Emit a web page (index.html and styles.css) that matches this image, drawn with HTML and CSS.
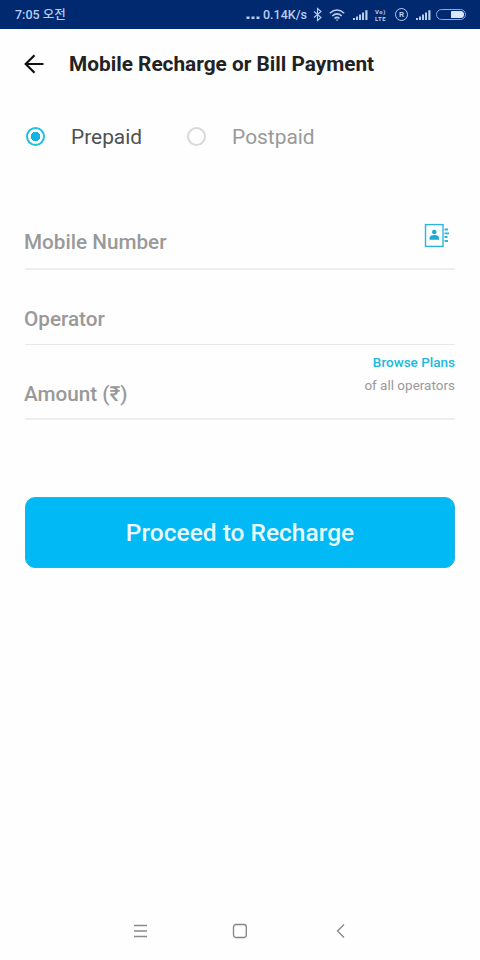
FILE: index.html
```
<!DOCTYPE html>
<html lang="en">
<head>
    <meta charset="UTF-8">
    <meta name="viewport" content="width=device-width, initial-scale=1.0">
    <title>Mobile Recharge or Bill Payment</title>
    <link rel="stylesheet" href="styles.css">
</head>
<body>
    <div class="statusbar">
        <span class="time">7:05 <span lang="ko">오전</span></span>
        <div class="status-right">
            <svg class="dots" width="14" height="16" viewBox="0 0 14 16"><path d="M0.500 9.500h3v2.500h-3zM5.500 9.500h3v2.500h-3zM10.500 9.500h3v2.500h-3z" fill="#b9cdf0"/></svg>
            <span class="speed">0.14K/s</span>
            <svg class="bluetooth" width="9" height="16" viewBox="0 0 9 16"><path d="M1 4.500l7 6-3.500 3V1.500L8 4.500l-7 6" fill="none" stroke="#b9cdf0" stroke-width="1.100"/></svg>
            <svg class="wifi" width="16" height="16" viewBox="0 0 16 16"><path d="M.8 6.300Q8-.200 15.200 6.300M3.200 9Q8 4.800 12.800 9M5.500 11.400Q8 9.300 10.500 11.400" fill="none" stroke="#b9cdf0" stroke-width="1.500"/><path d="M6.500 12.500h3L8 14z" fill="#b9cdf0"/></svg>
            <svg class="signal" width="15" height="16" viewBox="0 0 15 16"><path d="M0 11h2v2H0zM3 9.500h2V13H3zM6 7.500h2V13H6zM9 5.500h2V13H9zM12.300 3.200h2.200V13h-2.200z" fill="#b9cdf0"/></svg>
            <span class="volte"><span>Vo)</span><span>LTE</span></span>
            <span class="roaming">R</span>
            <svg class="signal" width="15" height="16" viewBox="0 0 15 16"><path d="M0 11h2v2H0zM3 9.500h2V13H3zM6 7.500h2V13H6zM9 5.500h2V13H9zM12.300 3.200h2.200V13h-2.200z" fill="#b9cdf0"/></svg>
            <span class="battery"><span class="level"></span></span>
        </div>
    </div>

    <header class="header">
        <svg width="20" height="20" viewBox="0 0 20 20"><path d="M19.500 10H2M10.500 1.200L1.700 10l8.800 8.800" fill="none" stroke="#111" stroke-width="2.200"/></svg>
        <h1>Mobile Recharge or Bill Payment</h1>
    </header>

    <main class="content">
        <div class="types">
            <label class="type selected"><input type="radio" name="type" checked>Prepaid</label>
            <label class="type"><input type="radio" name="type">Postpaid</label>
        </div>

        <div class="field number">
            <span class="label">Mobile Number</span>
            <svg class="contacts" width="26" height="26" viewBox="0 0 26 26">
                <rect x="1.500" y="1.600" width="17.500" height="21.800" fill="none" stroke="#2fb5da" stroke-width="1.400"/>
                <circle cx="10.300" cy="9" r="2.300" fill="#1ba9d5"/>
                <path d="M5.600 16.800v-1.500q0-3.300 4.700-3.300t4.700 3.300v1.500z" fill="#1ba9d5"/>
                <path d="M20.500 6.500h3.500M20.500 10.300h4.500M20.500 14h3M20.500 18h3.500" stroke="#2fb5da" stroke-width="1.800"/>
            </svg>
        </div>
        <div class="field operator">
            <span class="label">Operator</span>
        </div>
        <div class="field amount">
            <span class="label">Amount (₹)</span>
            <div class="plans">
                <a>Browse Plans</a>
                <span>of all operators</span>
            </div>
        </div>

        <button class="proceed">Proceed to Recharge</button>
    </main>

    <nav class="navbar">
        <svg width="16" height="16" viewBox="0 0 16 16"><path d="M2 2.500h13M2 8h13M2 13.500h13" stroke="#8a8a8a" stroke-width="1.300"/></svg>
        <svg width="16" height="16" viewBox="0 0 16 16"><rect x="1.500" y="1.500" width="12.800" height="13" rx="2.500" fill="none" stroke="#858585" stroke-width="1.300"/></svg>
        <svg width="16" height="16" viewBox="0 0 16 16"><path d="M12 1.500L5.500 8l6.500 6.500" fill="none" stroke="#858585" stroke-width="1.300"/></svg>
    </nav>
</body>
</html>
```
FILE: styles.css
```
body {
    margin: 0;
    height: 960px;
    display: flex;
    flex-direction: column;
    background-color: #fefefe;
    font-family: Roboto, "Noto Sans CJK KR", sans-serif;
}
svg {
    display: block;
    flex-shrink: 0;
}
.statusbar {
    height: 29px;
    box-sizing: border-box;
    padding: 0 14px 0 15px;
    display: flex;
    align-items: center;
    justify-content: space-between;
    background-color: #002970;
    color: #b9cdf0;
    font-size: 12.5px;
    font-weight: 500;
    line-height: 16px;
}
.status-right {
    display: flex;
    align-items: center;
}
.speed {
    width: 44px;
    margin-left: 3px;
    white-space: nowrap;
}
.bluetooth {
    margin-left: 6px;
}
.wifi {
    margin-left: 7px;
}
.signal {
    margin-left: 8px;
}
.volte {
    width: 13px;
    margin-left: 7px;
    display: flex;
    flex-direction: column;
    font-size: 6px;
    line-height: 7px;
    letter-spacing: 0.5px;
    font-weight: bold;
}
.roaming {
    width: 11px;
    height: 11px;
    margin-left: 7px;
    border: 1px solid #b9cdf0;
    border-radius: 50%;
    font-size: 8px;
    line-height: 11px;
    font-weight: bold;
    text-align: center;
}
.battery {
    width: 28px;
    height: 9px;
    margin-left: 5px;
    display: flex;
    justify-content: flex-end;
    border: 1px solid #8ca8dc;
    border-radius: 6px;
}
.level {
    width: 13px;
    height: 7px;
    margin: 1px;
    background-color: #dce6fa;
    border-radius: 1px 4px 4px 1px;
}
.header {
    height: 70px;
    padding-left: 24px;
    display: flex;
    align-items: center;
}
.header h1 {
    margin: 0 0 0 25px;
    font-size: 20.8px;
    font-weight: bold;
    color: #222;
}
.content {
    flex: 1;
    padding: 0 25px;
    display: flex;
    flex-direction: column;
}
.types {
    height: 76px;
    display: flex;
    align-items: center;
    gap: 44px;
}
.type {
    display: flex;
    align-items: center;
    font-size: 20.9px;
    color: #999;
}
.selected {
    color: #505050;
}
.type input {
    appearance: none;
    box-sizing: border-box;
    width: 19px;
    height: 19px;
    margin: -2px 26px 0 1px;
    border: 2px solid #d8d8d8;
    border-radius: 50%;
}
.type input:checked {
    border-color: #22bfe0;
    background: radial-gradient(circle, #12b4e4 4.5px, #fff 5px);
}
.field {
    box-sizing: border-box;
    display: flex;
    justify-content: space-between;
    align-items: flex-end;
    border-bottom: 1px solid #e8e8e8;
}
.label {
    margin-left: -1px;
    font-size: 20.7px;
    line-height: 24px;
    font-weight: 500;
    color: #999;
}
.number {
    height: 95px;
    padding-bottom: 14px;
    border-bottom-width: 2px;
    border-color: #eee;
}
.contacts {
    margin: 0 5px 5px 0;
}
.operator {
    height: 75px;
    padding-bottom: 13px;
}
.amount {
    height: 75px;
    padding-bottom: 12px;
    border-bottom-width: 2px;
    border-color: #eee;
}
.plans {
    display: flex;
    flex-direction: column;
    align-items: flex-end;
    margin-bottom: 9px;
    font-size: 13.5px;
    line-height: 23px;
    color: #999;
}
.plans a {
    color: #20b8dc;
    font-weight: 500;
}
.proceed {
    height: 71px;
    margin-top: 77px;
    border: 1px solid #28b2de;
    border-radius: 10px;
    background-color: #00b9f5;
    color: #e8fbff;
    font-family: inherit;
    font-size: 24.5px;
    font-weight: 500;
}
.navbar {
    height: 59px;
    display: flex;
    justify-content: center;
    align-items: center;
    gap: 84px;
}
```
